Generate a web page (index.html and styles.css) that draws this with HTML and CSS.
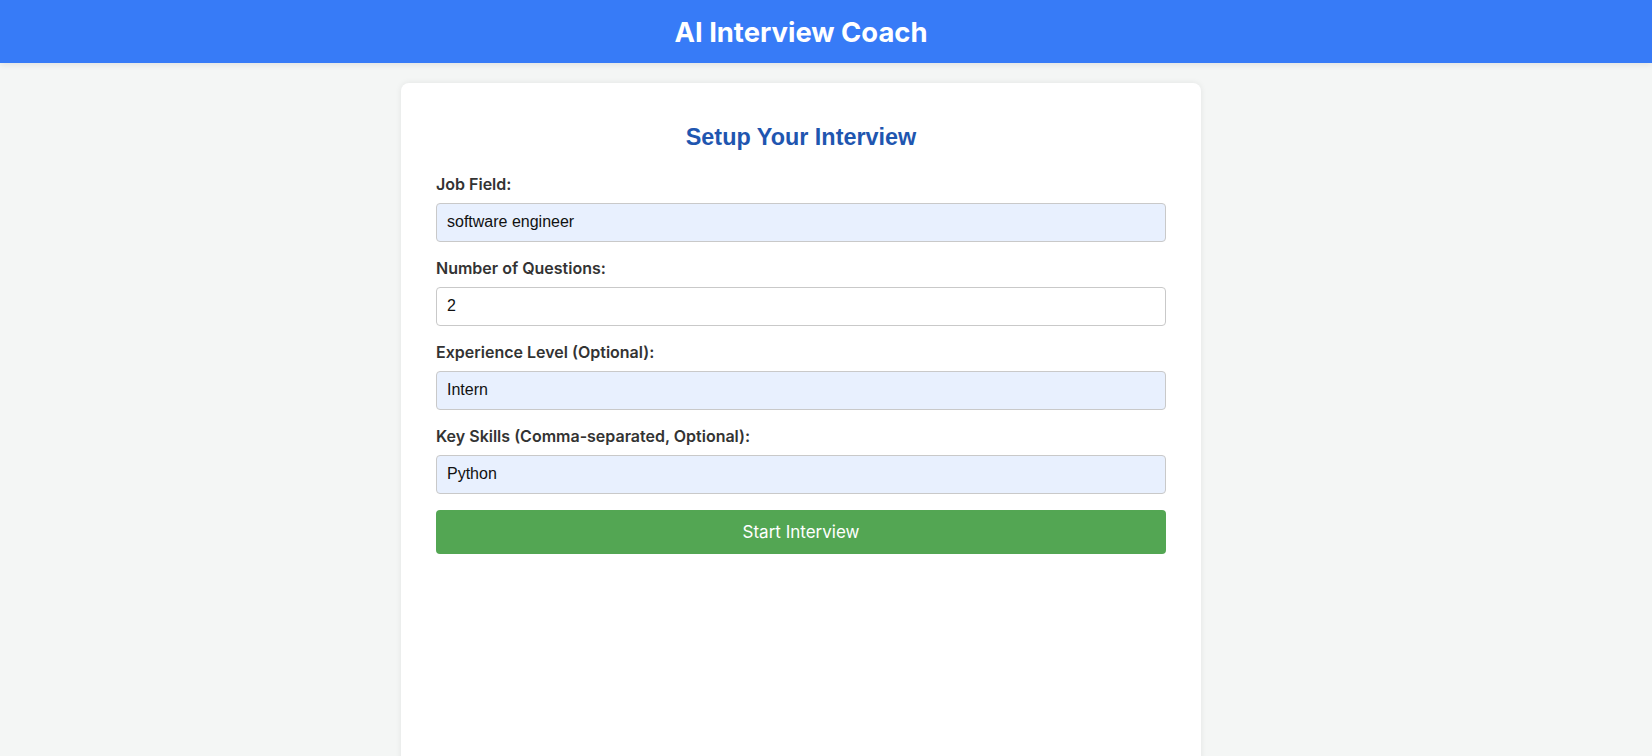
FILE: index.html
```html
<!DOCTYPE html>
<html>
<head>
<meta charset="utf-8">
<title>AI Interview Coach</title>
<link rel="stylesheet" href="styles.css">
</head>
<body>
<header class="topbar"><h1 class="brand">AI Interview Coach</h1></header>
<main class="page">
  <section class="card">
    <h2 class="card-title">Setup Your Interview</h2>
    <form class="setup-form">
      <div class="field">
        <label class="field-label">Job Field:</label>
        <input class="field-input filled" type="text" value="software engineer">
      </div>
      <div class="field">
        <label class="field-label">Number of Questions:</label>
        <input class="field-input" type="text" value="2">
      </div>
      <div class="field">
        <label class="field-label">Experience Level (Optional):</label>
        <input class="field-input filled" type="text" value="Intern">
      </div>
      <div class="field">
        <label class="field-label">Key Skills (Comma-separated, Optional):</label>
        <input class="field-input filled" type="text" value="Python">
      </div>
      <button class="start-btn" type="button">Start Interview</button>
    </form>
  </section>
</main>
</body>
</html>
```
FILE: styles.css
```css
* { box-sizing: border-box; }
html, body { margin: 0; padding: 0; }
body {
  background: #f4f6f5;
  font-family: Inter, "Liberation Sans", sans-serif;
  color: #333;
  height: 756px;
  overflow: hidden;
}
.topbar {
  height: 63px;
  background: #377bf7;
  display: flex;
  align-items: center;
  justify-content: center;
  padding-right: 50px;
  box-shadow: 0 2px 6px rgba(0,0,0,0.08);
  position: relative;
  z-index: 1;
}
.brand {
  margin: 0;
  color: #fff;
  font-size: 27.4px;
  font-weight: 700;
  letter-spacing: 0;
}
.page {
  display: flex;
  justify-content: center;
  padding-top: 20px;
  padding-right: 50px;
}
.card {
  width: 800px;
  height: 700px;
  background: #fff;
  border-radius: 8px;
  box-shadow: 0 0 6px rgba(0,0,0,0.08);
  padding: 40px 35px;
}
.card-title {
  margin: 0 0 23px;
  text-align: center;
  color: #1f56b0;
  font-family: "Liberation Sans", Arial, sans-serif;
  font-size: 23.4px;
  line-height: 28px;
  font-weight: 700;
}
.setup-form { display: flex; flex-direction: column; }
.field { display: flex; flex-direction: column; margin-bottom: 16px; }
.field-label {
  font-size: 16px;
  line-height: 20.5px;
  font-weight: 600;
  color: #333;
  margin-bottom: 8px;
}
.field-input {
  height: 39.5px;
  border: 1px solid #c9c9c9;
  border-radius: 4px;
  padding: 0 10px;
  font-family: "Liberation Sans", Arial, sans-serif;
  font-size: 16px;
  color: #111;
  background: #fff;
  outline: none;
}
.field-input.filled { background: #e8f0fe; }
.start-btn {
  height: 44px;
  margin-top: 0;
  border: none;
  border-radius: 4px;
  background: #53a653;
  color: #fff;
  font-family: Inter, "Liberation Sans", sans-serif;
  font-size: 17px;
  font-weight: 400;
  cursor: pointer;
}
```
